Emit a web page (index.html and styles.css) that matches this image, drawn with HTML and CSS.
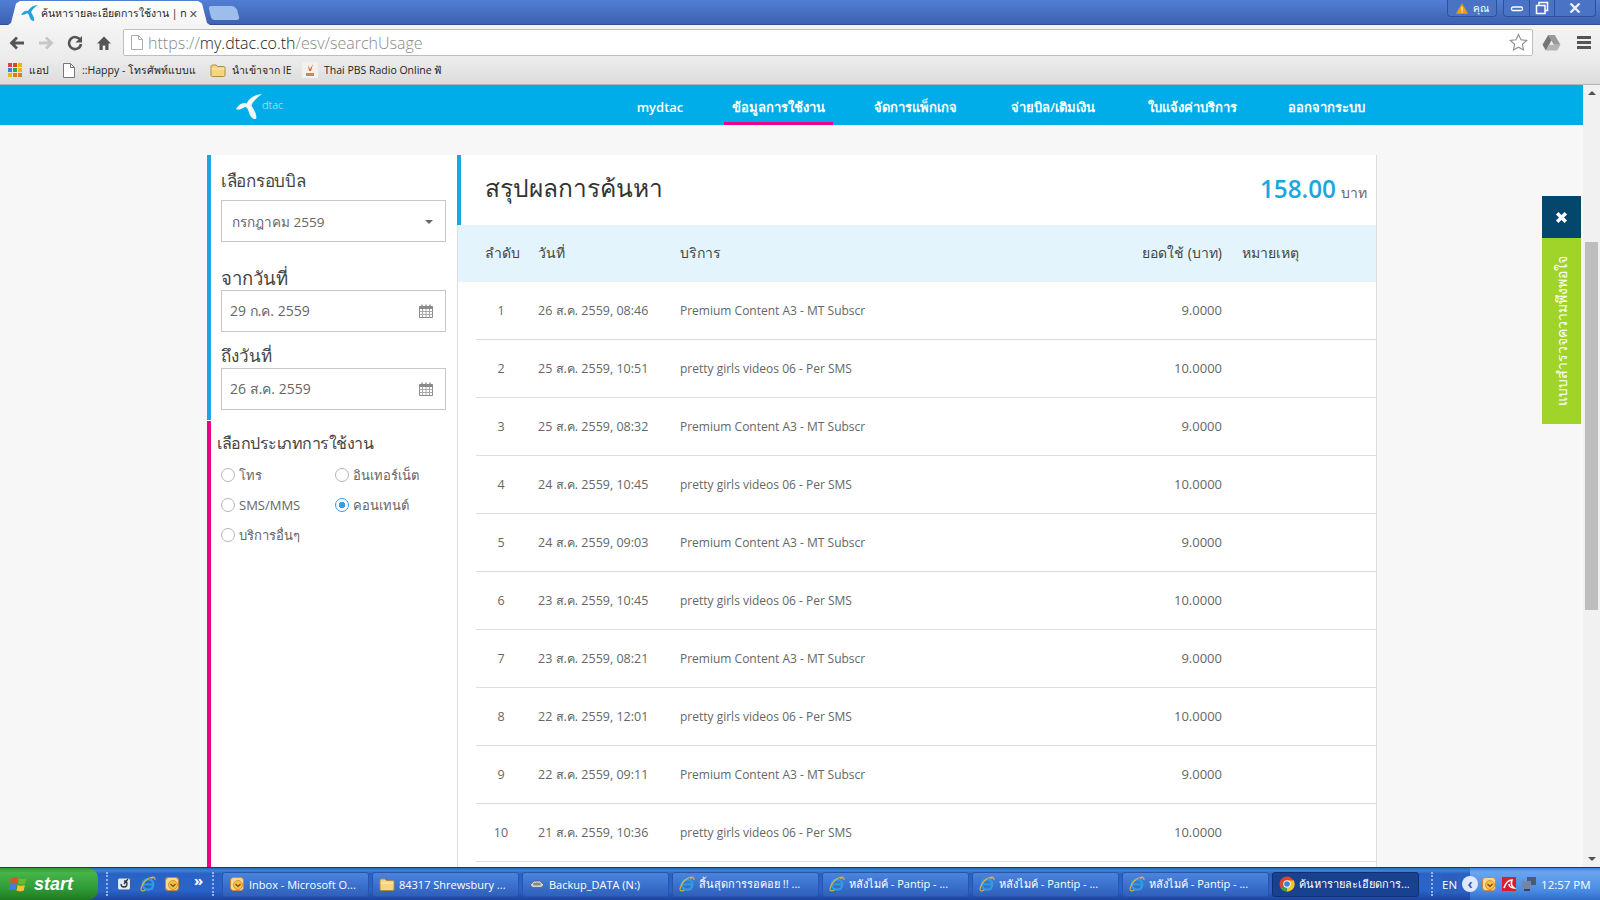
FILE: index.html
```html
<!DOCTYPE html>
<html lang="th">
<head>
<meta charset="utf-8">
<title>ค้นหารายละเอียดการใช้งาน</title>
<link rel="stylesheet" href="styles.css">
</head>
<body>
<svg class="defs" width="0" height="0">
  <defs>
    <symbol id="ie" viewBox="0 0 20 20">
      <circle cx="10" cy="10.5" r="6.5" fill="none" stroke="#2f9be0" stroke-width="3"/>
      <path d="M4 10.5h12" stroke="#2f9be0" stroke-width="2.4"/>
      <path d="M12 16.500h5l-1 1h-6z" fill="#2f9be0"/>
      <path d="M18 1.500C13 0 4 6 1.500 15c-1 4 2 4.500 5 2.500M14 3c3-1.500 5.500-1.500 4.500 2" fill="none" stroke="#e2b33c" stroke-width="1.400"/>
    </symbol>
    <symbol id="outlook" viewBox="0 0 16 16">
      <rect x="1.500" y="1.500" width="13" height="13" rx="3" fill="#f7d98f" stroke="#c9863a"/>
      <circle cx="9" cy="9" r="4.500" fill="#f5c04a" stroke="#cf8a2c" stroke-width=".8"/>
      <path d="M6.500 8l2.500 2.500L11.500 8" fill="none" stroke="#7a4a12" stroke-width="1.200"/>
    </symbol>
    <symbol id="folder" viewBox="0 0 16 16">
      <path d="M1 4.500C1 3.500 1.500 3 2.500 3h3.500l1.500 1.500h6c1 0 1.500.5 1.500 1.500v7c0 .8-.5 1.500-1.500 1.500h-11C1.500 14.500 1 13.800 1 13z" fill="#f5d581" stroke="#b08a3a"/>
      <path d="M1.500 7h13" stroke="#fbeab7"/>
    </symbol>
    <symbol id="calendar" viewBox="0 0 14 14">
      <path d="M.5 2.500h13v11H.5z" fill="none" stroke="#8a8a8a"/>
      <path d="M.5 2h13v3H.5z" fill="#8a8a8a"/>
      <path d="M3 .5v3M7 .5v3M11 .5v3" stroke="#8a8a8a" stroke-width="1.400"/>
      <path d="M.5 7.500h13M.5 10.500h13M3.500 5v8M7 5v8M10.500 5v8" stroke="#a8a8a8"/>
    </symbol>
    <symbol id="dtacmark" viewBox="0 0 26 25">
      <path d="M26 0C20 .5 14 3 10.500 9.500 7 8 3 10 0 15c2 1.500 6 0 9-2 2 0 3 2 4.500 7 1.500 4 4.500 5.500 6.500 5 1.500-4-2-9-4.500-13.500C17 7 22 3 26 0z"/>
    </symbol>
  </defs>
</svg>

<div class="app">
  <header class="browser">
    <div class="tabstrip">
      <div class="tab">
        <svg class="tab-fav" viewBox="0 0 26 25"><use href="#dtacmark"/></svg>
        <span class="tab-title">ค้นหารายละเอียดการใช้งาน | n</span>
        <span class="tab-close">✕</span>
      </div>
      <div class="newtab"></div>
      <div class="strip-space"></div>
      <div class="user-chip">
        <svg class="warn" viewBox="0 0 14 12"><path d="M7 0l7 12H0z" fill="#f09a12"/><path d="M7 4v4.500M7 9.500v1.500" stroke="#fff" stroke-width="1.200"/></svg>
        <span>คุณ</span>
      </div>
      <div class="winbtns">
        <div class="winbtn winbtn-s"><svg viewBox="0 0 14 12" width="14" height="12"><rect x="1.500" y="5" width="11" height="3.500" rx="1.500" fill="none" stroke="#fff" stroke-width="1.300"/></svg></div>
        <div class="winbtn winbtn-s"><svg viewBox="0 0 14 14" width="14" height="14"><path d="M4 4V1.500h8.500v8H10M1.500 4.500H10v8H1.500z" fill="none" stroke="#fff" stroke-width="1.500"/></svg></div>
        <div class="winbtn winbtn-l"><svg viewBox="0 0 12 10" width="12" height="10"><path d="M1.500.5l9 9M10.500.5l-9 9" stroke="#e8eefc" stroke-width="2.400"/></svg></div>
      </div>
    </div>
    <div class="toolbar">
      <svg class="tool" viewBox="0 0 16 16"><path d="M15 8H3M8 2.500L2.500 8 8 13.500" fill="none" stroke="#555" stroke-width="2.800"/></svg>
      <svg class="tool" viewBox="0 0 16 16"><path d="M1 8h12M8 2.500L13.500 8 8 13.500" fill="none" stroke="#c6c6c6" stroke-width="2.800"/></svg>
      <svg class="tool" viewBox="0 0 16 16"><path d="M13.500 5.500A6 6 0 1 0 14 9" fill="none" stroke="#555" stroke-width="2.600"/><path d="M15 1v6.500H8.500z" fill="#555"/></svg>
      <svg class="tool" viewBox="0 0 16 16"><path d="M8 1.500L1 8.500h2.500V15h3.200v-4.500h2.600V15h3.200V8.500H15z" fill="#555"/></svg>
      <div class="omnibox">
        <svg class="page-ic" viewBox="0 0 12 15"><path d="M.5.500h7l4 4v10H.5z" fill="#fff" stroke="#aaa"/><path d="M7.500.500v4h4" fill="none" stroke="#aaa"/></svg>
        <span class="url"><span class="url-dim">https://</span>my.dtac.co.th<span class="url-dim">/esv/searchUsage</span></span>
        <svg class="star" viewBox="0 0 20 20"><path d="M10 1.500l2.600 5.600 6 .7-4.500 4.100 1.200 6L10 15l-5.300 2.900 1.200-6L1.400 7.800l6-.7z" fill="#fff" stroke="#8f8f8f" stroke-width="1.200"/></svg>
      </div>
      <svg class="drive" viewBox="0 0 20 18"><path d="M6.500 1h7l6 10.500h-7z" fill="#9a9a9a"/><path d="M6.500 1L.5 11.500l3.500 6 6-10.500z" fill="#757575"/><path d="M4 17.500h12l3.500-6h-12z" fill="#b4b4b4"/></svg>
      <div class="menu-ic"><i></i><i></i><i></i></div>
    </div>
    <div class="bookmarks">
      <div class="bm bm-apps">
        <div class="apps-grid"><i class="c1"></i><i class="c1"></i><i class="c2"></i><i class="c3"></i><i class="c4"></i><i class="c2"></i><i class="c2"></i><i class="c5"></i><i class="c5"></i></div>
        <span>แอป</span>
      </div>
      <div class="bm bm-happy">
        <svg class="bm-ic" viewBox="0 0 12 15"><path d="M.5.500h7l4 4v10H.5z" fill="#fff" stroke="#777"/><path d="M7.500.500v4h4" fill="none" stroke="#777"/></svg>
        <span class="bm-clip">::Happy - โทรศัพท์แบบแ</span>
      </div>
      <div class="bm bm-ie">
        <svg class="bm-ic16" viewBox="0 0 16 16"><use href="#folder"/></svg>
        <span>นำเข้าจาก IE</span>
      </div>
      <div class="bm bm-pbs">
        <svg class="bm-ic16" viewBox="0 0 16 16"><rect width="16" height="16" fill="#f4f1ec"/><path d="M6 3l2 4 3-5-2 7H7z" fill="#e0662a"/><rect x="4" y="11" width="8" height="3" fill="#c98a5a"/></svg>
        <span>Thai PBS Radio Online ฟั</span>
      </div>
    </div>
  </header>

  <div class="viewport">
    <div class="page">
      <nav class="topnav">
        <div class="nav-inner">
          <div class="brand">
            <svg class="brand-mark" viewBox="0 0 26 25"><use href="#dtacmark"/></svg>
            <span class="brand-name">dtac</span>
          </div>
          <div class="nav-links">
            <a class="nav-link">mydtac</a>
            <a class="nav-link is-active">ข้อมูลการใช้งาน</a>
            <a class="nav-link">จัดการแพ็กเกจ</a>
            <a class="nav-link">จ่ายบิล/เติมเงิน</a>
            <a class="nav-link">ใบแจ้งค่าบริการ</a>
            <a class="nav-link">ออกจากระบบ</a>
          </div>
        </div>
      </nav>

      <div class="content">
        <aside class="sidebar">
          <section class="side-blue">
            <h3 class="side-title side-title-first">เลือกรอบบิล</h3>
            <div class="field field-select"><span>กรกฎาคม 2559</span><i class="caret"></i></div>
            <h3 class="side-title side-title-from">จากวันที่</h3>
            <div class="field field-date"><span>29 ก.ค. 2559</span><svg class="cal" viewBox="0 0 14 14"><use href="#calendar"/></svg></div>
            <h3 class="side-title side-title-to">ถึงวันที่</h3>
            <div class="field field-date"><span>26 ส.ค. 2559</span><svg class="cal" viewBox="0 0 14 14"><use href="#calendar"/></svg></div>
          </section>
          <section class="side-pink">
            <h3 class="side-title side-title-type">เลือกประเภทการใช้งาน</h3>
            <div class="radios">
              <label class="radio"><i class="dot"></i>โทร</label>
              <label class="radio"><i class="dot"></i>อินเทอร์เน็ต</label>
              <label class="radio"><i class="dot"></i>SMS/MMS</label>
              <label class="radio"><i class="dot is-on"></i>คอนเทนต์</label>
              <label class="radio"><i class="dot"></i>บริการอื่นๆ</label>
            </div>
          </section>
        </aside>

        <main class="main">
          <div class="summary">
            <h1 class="summary-title">สรุปผลการค้นหา</h1>
            <div class="summary-total"><b>158.00</b> <span>บาท</span></div>
          </div>
          <table class="usage">
            <colgroup><col class="c-no"><col class="c-date"><col class="c-svc"><col class="c-amt"><col class="c-note"></colgroup>
            <thead>
              <tr><th class="th-no">ลำดับ</th><th>วันที่</th><th>บริการ</th><th class="th-amt">ยอดใช้ (บาท)</th><th class="th-note">หมายเหตุ</th></tr>
            </thead>
            <tbody>
              <tr><td class="td-no">1</td><td class="td-date">26 ส.ค. 2559, 08:46</td><td class="td-svc">Premium Content A3 - MT Subscr</td><td class="td-amt">9.0000</td><td></td></tr>
              <tr><td class="td-no">2</td><td class="td-date">25 ส.ค. 2559, 10:51</td><td class="td-svc">pretty girls videos 06 - Per SMS</td><td class="td-amt">10.0000</td><td></td></tr>
              <tr><td class="td-no">3</td><td class="td-date">25 ส.ค. 2559, 08:32</td><td class="td-svc">Premium Content A3 - MT Subscr</td><td class="td-amt">9.0000</td><td></td></tr>
              <tr><td class="td-no">4</td><td class="td-date">24 ส.ค. 2559, 10:45</td><td class="td-svc">pretty girls videos 06 - Per SMS</td><td class="td-amt">10.0000</td><td></td></tr>
              <tr><td class="td-no">5</td><td class="td-date">24 ส.ค. 2559, 09:03</td><td class="td-svc">Premium Content A3 - MT Subscr</td><td class="td-amt">9.0000</td><td></td></tr>
              <tr><td class="td-no">6</td><td class="td-date">23 ส.ค. 2559, 10:45</td><td class="td-svc">pretty girls videos 06 - Per SMS</td><td class="td-amt">10.0000</td><td></td></tr>
              <tr><td class="td-no">7</td><td class="td-date">23 ส.ค. 2559, 08:21</td><td class="td-svc">Premium Content A3 - MT Subscr</td><td class="td-amt">9.0000</td><td></td></tr>
              <tr><td class="td-no">8</td><td class="td-date">22 ส.ค. 2559, 12:01</td><td class="td-svc">pretty girls videos 06 - Per SMS</td><td class="td-amt">10.0000</td><td></td></tr>
              <tr><td class="td-no">9</td><td class="td-date">22 ส.ค. 2559, 09:11</td><td class="td-svc">Premium Content A3 - MT Subscr</td><td class="td-amt">9.0000</td><td></td></tr>
              <tr><td class="td-no">10</td><td class="td-date">21 ส.ค. 2559, 10:36</td><td class="td-svc">pretty girls videos 06 - Per SMS</td><td class="td-amt">10.0000</td><td></td></tr>
            </tbody>
          </table>
        </main>
      </div>

      <div class="feedback">
        <div class="fb-close"><svg viewBox="0 0 12 12" width="13" height="13"><path d="M2 2l8 8M10 2l-8 8" stroke="#fff" stroke-width="3.200"/></svg></div>
        <div class="fb-label"><span>แบบสำรวจความพึงพอใจ</span></div>
      </div>
    </div>
    <div class="scrollbar">
      <i class="arrow arrow-up"></i>
      <div class="track"><div class="thumb"></div></div>
      <i class="arrow arrow-down"></i>
    </div>
  </div>

  <footer class="taskbar">
    <div class="start">
      <svg class="flag" viewBox="0 0 18 18"><path d="M2 3.500c2-1.200 4-1 6 0l-1 5c-2-1-4-1-6 0z" fill="#e2502a"/><path d="M9 3.800c2 1 4 1 6.500 0l-1 5c-2 1-4 1-6.500 0z" fill="#6cb82e"/><path d="M.800 9.500c2-1 4-1 6 0l-1 5c-2-1-4-1-6 0z" fill="#3f7fe0"/><path d="M7.800 9.800c2 1 4 1 6.500 0l-1 5c-2 1-4 1-6.500 0z" fill="#f2c52a"/></svg>
      <span>start</span>
    </div>
    <div class="grip"></div>
    <div class="quick">
      <svg class="q-ic" viewBox="0 0 16 16"><rect x="1.500" y="2" width="13" height="12" rx="2" fill="#dfeaf8" stroke="#2f5d9c"/><path d="M5 8a3 3 0 1 0 3-3M8 8l4-5" fill="none" stroke="#333" stroke-width="1.300"/></svg>
      <svg class="q-ic" viewBox="0 0 20 20"><use href="#ie"/></svg>
      <svg class="q-ic" viewBox="0 0 16 16"><use href="#outlook"/></svg>
      <span class="chev">»</span>
    </div>
    <div class="grip"></div>
    <div class="tasks">
      <div class="task"><svg class="t-ic" viewBox="0 0 16 16"><use href="#outlook"/></svg><span>Inbox - Microsoft O...</span></div>
      <div class="task"><svg class="t-ic" viewBox="0 0 16 16"><use href="#folder"/></svg><span>84317 Shrewsbury ...</span></div>
      <div class="task"><svg class="t-ic" viewBox="0 0 16 16"><path d="M1 9l4-4h6l4 4-3 2.500H4z" fill="#cfd3da" stroke="#555" stroke-width=".7"/><ellipse cx="8" cy="8" rx="4" ry="1.500" fill="#888"/></svg><span>Backup_DATA (N:)</span></div>
      <div class="task"><svg class="t-ic" viewBox="0 0 20 20"><use href="#ie"/></svg><span>สิ้นสุดการรอคอย !! ...</span></div>
      <div class="task"><svg class="t-ic" viewBox="0 0 20 20"><use href="#ie"/></svg><span>หลังไมค์ - Pantip - ...</span></div>
      <div class="task"><svg class="t-ic" viewBox="0 0 20 20"><use href="#ie"/></svg><span>หลังไมค์ - Pantip - ...</span></div>
      <div class="task"><svg class="t-ic" viewBox="0 0 20 20"><use href="#ie"/></svg><span>หลังไมค์ - Pantip - ...</span></div>
      <div class="task task-active"><svg class="t-ic" viewBox="0 0 16 16"><circle cx="8" cy="8" r="7.500" fill="#e0442f"/><path d="M8 8L1.500 12A7.500 7.500 0 0 0 8 15.500z" fill="#3aa04a"/><path d="M8 4.500h6.800A7.500 7.500 0 0 1 8 15.500z" fill="#f4c430"/><circle cx="8" cy="8" r="3.700" fill="#fff"/><circle cx="8" cy="8" r="2.800" fill="#3f7fe0"/></svg><span>ค้นหารายละเอียดการ...</span></div>
    </div>
    <div class="grip grip-tray"></div>
    <span class="lang">EN</span>
    <div class="tray-back"><span>‹</span></div>
    <div class="tray">
      <svg class="tr-ic" viewBox="0 0 16 16"><use href="#outlook"/></svg>
      <svg class="tr-ic" viewBox="0 0 16 16"><rect x="1" y="1" width="14" height="14" fill="#d81e2c"/><path d="M3 12c2-6 5-8 8-8-1 3-1 6 2 8-3 0-5-2-5-4" fill="none" stroke="#fff" stroke-width="1.600"/></svg>
      <svg class="tr-ic" viewBox="0 0 16 16"><rect x="6" y="1" width="9" height="8" fill="#4b5a78"/><rect x="1" y="5" width="9" height="8" fill="#7585a8"/><rect x="3" y="13" width="6" height="2" fill="#39425a"/></svg>
      <span class="clock">12:57 PM</span>
    </div>
  </footer>
</div>
</body>
</html>
```

FILE: styles.css
```css
* { box-sizing: border-box; }
html, body { margin: 0; padding: 0; height: 100%; overflow: hidden; }
body { font-family: "Open Sans", "DejaVu Sans", "Noto Sans", sans-serif; color: #555; }
.defs { position: absolute; }
.app { display: flex; flex-direction: column; height: 900px; width: 1600px; }

/* browser chrome */
.browser { flex: 0 0 85px; display: flex; flex-direction: column; }
.tabstrip { flex: 0 0 25px; display: flex; align-items: flex-end; padding-left: 8px; background: linear-gradient(#517fd6, #3d62b0); border-bottom: 1px solid #2f5296; }
.tab { width: 202px; height: 24px; display: flex; align-items: center; padding: 0 12px 0 13px; background: linear-gradient(#fff, #f4f4f4); clip-path: polygon(0 100%, 3px 92%, 8px 10%, 12px 0, calc(100% - 12px) 0, calc(100% - 8px) 10%, calc(100% - 3px) 92%, 100% 100%); font-size: 10.500px; color: #222; margin-bottom: -1px; }
.tab-fav { width: 17px; height: 16px; fill: #1aa7e0; flex: none; margin-right: 3px; }
.tab-title { flex: 1; white-space: nowrap; }
.tab-close { font-size: 11px; font-weight: 700; color: #555; margin-left: 2px; }
.newtab { width: 28px; height: 14px; margin: 0 0 4px 0; background: #9dbdea; border-radius: 3px 5px 3px 3px; transform: skewX(14deg); }
.strip-space { flex: 1; }
.user-chip { align-self: flex-start; width: 50px; height: 17px; display: flex; align-items: center; justify-content: center; gap: 5px; border: 1px solid #2f5296; border-top: 0; border-radius: 0 0 4px 4px; font-size: 10px; color: #fff; background: #4a73c6; margin-right: 6px; }
.warn { width: 12px; height: 11px; }
.winbtns { align-self: flex-start; display: flex; height: 17px; border: 1px solid #2f5296; border-top: 0; border-radius: 0 0 4px 4px; background: #4a73c6; margin-right: 4px; }
.winbtn { display: flex; align-items: center; justify-content: center; border-left: 1px solid #2f5296; }
.winbtn:first-child { border-left: 0; }
.winbtn-s { width: 25px; }
.winbtn-l { width: 41px; }
.toolbar { flex: 0 0 33px; display: flex; align-items: center; padding: 2px 9px 0 9px; gap: 13px; background: linear-gradient(#f4f4f4, #ececec); }
.tool { width: 16px; height: 16px; flex: none; }
.omnibox { margin-left: -2px; flex: 1; height: 27px; display: flex; align-items: center; background: #fff; border: 1px solid #bdbdbd; border-radius: 2px; padding: 0 4px 0 7px; }
.page-ic { width: 12px; height: 15px; flex: none; margin-right: 5px; }
.url { flex: 1; font-family: "Open Sans", sans-serif; font-size: 16px; font-weight: 300; color: #222; }
.url-dim { color: #8a8a8a; }
.star { width: 19px; height: 19px; }
.drive { width: 19px; height: 17px; flex: none; margin-left: -4px; }
.menu-ic { width: 14px; display: flex; flex-direction: column; gap: 2px; flex: none; margin-left: 3px; }
.menu-ic i { display: block; height: 3px; background: #555; }
.bookmarks { flex: 0 0 27px; display: flex; align-items: center; padding: 0 0 2px 8px; background: linear-gradient(#ececec, #dcdcdc); border-bottom: 1px solid #b4b4b4; font-size: 10.500px; color: #222; }
.bm { display: flex; align-items: center; gap: 6px; white-space: nowrap; }
.bm-apps { width: 55px; gap: 7px; }
.bm-happy { width: 147px; gap: 7px; }
.bm-ie { width: 92px; }
.apps-grid { display: grid; grid-template-columns: repeat(3, 4px); gap: 1px; }
.apps-grid i { height: 4px; display: block; }
.c1 { background: #e0442f; }
.c2 { background: #f4b400; }
.c3 { background: #3f7fe0; }
.c4 { background: #2fa84f; }
.c5 { background: #e57b1f; }
.bm-ic { width: 12px; height: 15px; flex: none; }
.bm-ic16 { width: 16px; height: 16px; flex: none; }
.bm-clip { width: 117px; overflow: hidden; }

/* page */
.viewport { flex: 1; min-height: 0; display: flex; overflow: hidden; }
.page { flex: 1; position: relative; background: #f7f7f7; overflow: hidden; }
.topnav { height: 40px; background: #00ade8; }
.nav-inner { display: flex; justify-content: space-between; height: 40px; padding: 0 206px 0 236px; }
.brand { display: flex; align-items: center; color: #cfeefb; }
.brand-mark { width: 26px; height: 25px; margin-top: 3px; fill: #f2f7fa; }
.brand-name { font-size: 11px; font-weight: 300; margin-top: -1px; }
.nav-links { display: grid; grid-template-columns: 68px 109px 105px 110px 108px 101px; gap: 30px; }
.nav-link { display: flex; align-items: center; justify-content: center; padding-top: 4px; font-size: 13px; font-weight: 600; color: #fff; white-space: nowrap; }
.nav-link.is-active { border-bottom: 3px solid #ec008c; padding-top: 7px; }
.content { display: flex; margin: 30px 0 0 207px; width: 1170px; }

.sidebar { flex: 0 0 250px; display: flex; flex-direction: column; background: #fff; min-height: 720px; }
.side-blue { height: 265px; border-left: 4px solid #1aa7e0; padding: 0 11px 0 10px; }
.side-pink { flex: 1; margin-top: 1px; border-left: 4px solid #ec008c; padding: 0 6px; }
.side-title { margin: 0; font-size: 18px; font-weight: 400; color: #444; line-height: 24px; }
.side-title-first { padding-top: 14px; height: 45px; font-size: 17px; letter-spacing: -.3px; }
.side-title-from { padding-top: 24px; height: 48px; font-size: 18.500px; }
.side-title-to { padding-top: 12px; height: 36px; font-size: 17px; }
.side-title-type { padding-top: 10px; height: 39px; font-size: 16px; letter-spacing: -.5px; }
.field { height: 42px; display: flex; align-items: center; justify-content: space-between; border: 1px solid #c8c8c8; background: #fff; font-size: 14px; color: #666; }
.field-select { padding: 2px 12px 0 10px; font-size: 13.500px; }
.field-date { padding: 0 12px 0 8px; }
.caret { width: 0; height: 0; border: 4px solid transparent; border-top: 4px solid #666; border-bottom: 0; }
.cal { width: 14px; height: 14px; }
.radios { display: grid; grid-template-columns: 114px 1fr; grid-auto-rows: 30px; padding-left: 4px; }
.radio { display: flex; align-items: center; gap: 4px; font-size: 13px; color: #666; }
.dot { width: 14px; height: 14px; flex: none; border: 1px solid #b5b5b5; border-radius: 50%; background: #fff; }
.dot.is-on { border-color: #3a9be8; background: radial-gradient(circle, #3a9be8 0 3px, #fff 3.500px); }

.main { flex: 1; background: #fff; border-left: 1px solid #ddd; border-right: 1px solid #ddd; }
.summary { height: 70px; margin-left: -1px; display: flex; align-items: center; justify-content: space-between; padding: 0 9px 4px 24px; border-left: 4px solid #1aa7e0; }
.summary-title { margin: 0; font-size: 24.500px; font-weight: 400; color: #333; }
.summary-total { font-size: 14px; color: #666; display: flex; align-items: baseline; gap: 5px; }
.summary-total b { font-size: 24.300px; font-weight: 600; color: #1aa7e0; }
.usage { width: 100%; table-layout: fixed; border-collapse: collapse; }
.c-no { width: 80px; }
.c-date { width: 142px; }
.c-svc { width: 400px; }
.c-amt { width: 142px; }
.usage th { height: 57px; background: #e3f4fc; font-size: 14px; font-weight: 400; color: #444; text-align: left; padding: 0 0 2px; }
.usage .th-no { padding-left: 27px; }
.usage .th-amt { text-align: right; }
.usage .th-note { padding-left: 20px; }
.usage td { height: 58px; font-size: 12.500px; color: #666; padding: 0 0 2px; white-space: nowrap; background: linear-gradient(#ddd, #ddd) left bottom / 100% 1px no-repeat; }
.usage .td-date { padding-bottom: 0; }
.usage .td-svc { font-size: 12px; }
.usage .td-no { text-align: center; padding-left: 6px; background-position: 18px bottom; }
.usage .td-amt { text-align: right; font-size: 13px; }

.feedback { position: absolute; top: 111px; right: 2px; width: 39px; display: flex; flex-direction: column; }
.fb-close { height: 42px; display: flex; align-items: center; justify-content: center; background: #04466c; }
.fb-label { height: 186px; display: flex; align-items: center; justify-content: center; background: #a0d429; color: #fff; font-size: 14px; }
.fb-label span { writing-mode: vertical-rl; transform: rotate(180deg); white-space: nowrap; }

.scrollbar { flex: 0 0 17px; display: flex; flex-direction: column; align-items: center; background: #f1f1f1; }
.arrow { flex: none; display: block; width: 0; height: 0; border: 4px solid transparent; }
.arrow-up { border-bottom: 4px solid #505050; border-top: 0; margin-top: 6px; }
.arrow-down { border-top: 4px solid #505050; border-bottom: 0; margin-bottom: 6px; }
.track { flex: 1; width: 100%; padding: 147px 2px 0; }
.thumb { height: 368px; background: #bdbdbd; }

/* taskbar */
.taskbar { flex: 0 0 33px; display: flex; align-items: center; background: linear-gradient(#1f6fb0 0, #3b7fe0 8%, #2a62c4 18%, #2b63c9 70%, #1c45a0 100%); border-top: 1px solid #17404f; color: #fff; font-size: 11px; }
.start { flex: none; width: 98px; height: 32px; display: flex; align-items: center; gap: 5px; padding-left: 9px; background: linear-gradient(#2f9a37 0, #46b54a 15%, #2f9a37 65%, #1f7a20 100%); border-radius: 0 10px 10px 0; font-family: "Liberation Sans", sans-serif; font-size: 18px; font-style: italic; font-weight: 700; }
.flag { width: 20px; height: 20px; flex: none; }
.grip { flex: none; width: 2px; height: 24px; margin: 0 8px; border-left: 2px dotted #8fb7ee; }
.quick { flex: none; width: 88px; display: flex; align-items: center; gap: 8px; }
.q-ic { width: 16px; height: 16px; flex: none; }
.chev { font-size: 15px; font-weight: 700; margin: -8px 0 0 6px; }
.tasks { flex: none; display: flex; gap: 3px; }
.task { width: 147px; height: 25px; display: flex; align-items: center; gap: 4px; padding-left: 6px; background: linear-gradient(#4a85dc, #3b72cf 50%, #2f5fbb); border-radius: 3px; border: 1px solid #2a55a8; white-space: nowrap; overflow: hidden; }
.task-active { background: #18418f; border-color: #10306e; }
.t-ic { width: 16px; height: 16px; flex: none; }
.grip-tray { margin: 0 8px 0 12px; }
.lang { flex: none; font-size: 11.500px; padding: 2px 1px; background: #2d5fb8; }
.tray-back { flex: none; width: 16px; height: 16px; margin-left: 4px; display: flex; align-items: center; justify-content: center; border-radius: 50%; background: #dfe9fb; color: #2f5fb8; font-size: 14px; font-weight: 700; line-height: 1; position: relative; z-index: 1; }
.tray { flex: 1; height: 32px; margin-left: -8px; display: flex; align-items: center; gap: 4px; padding-left: 11px; background: linear-gradient(#3f84dc, #6aa5ee 12%, #4a8ce4 70%, #2f6cc8); }
.tr-ic { width: 16px; height: 16px; flex: none; }
.clock { margin-left: 0; color: #fff; font-size: 11.500px; white-space: nowrap; }
```
